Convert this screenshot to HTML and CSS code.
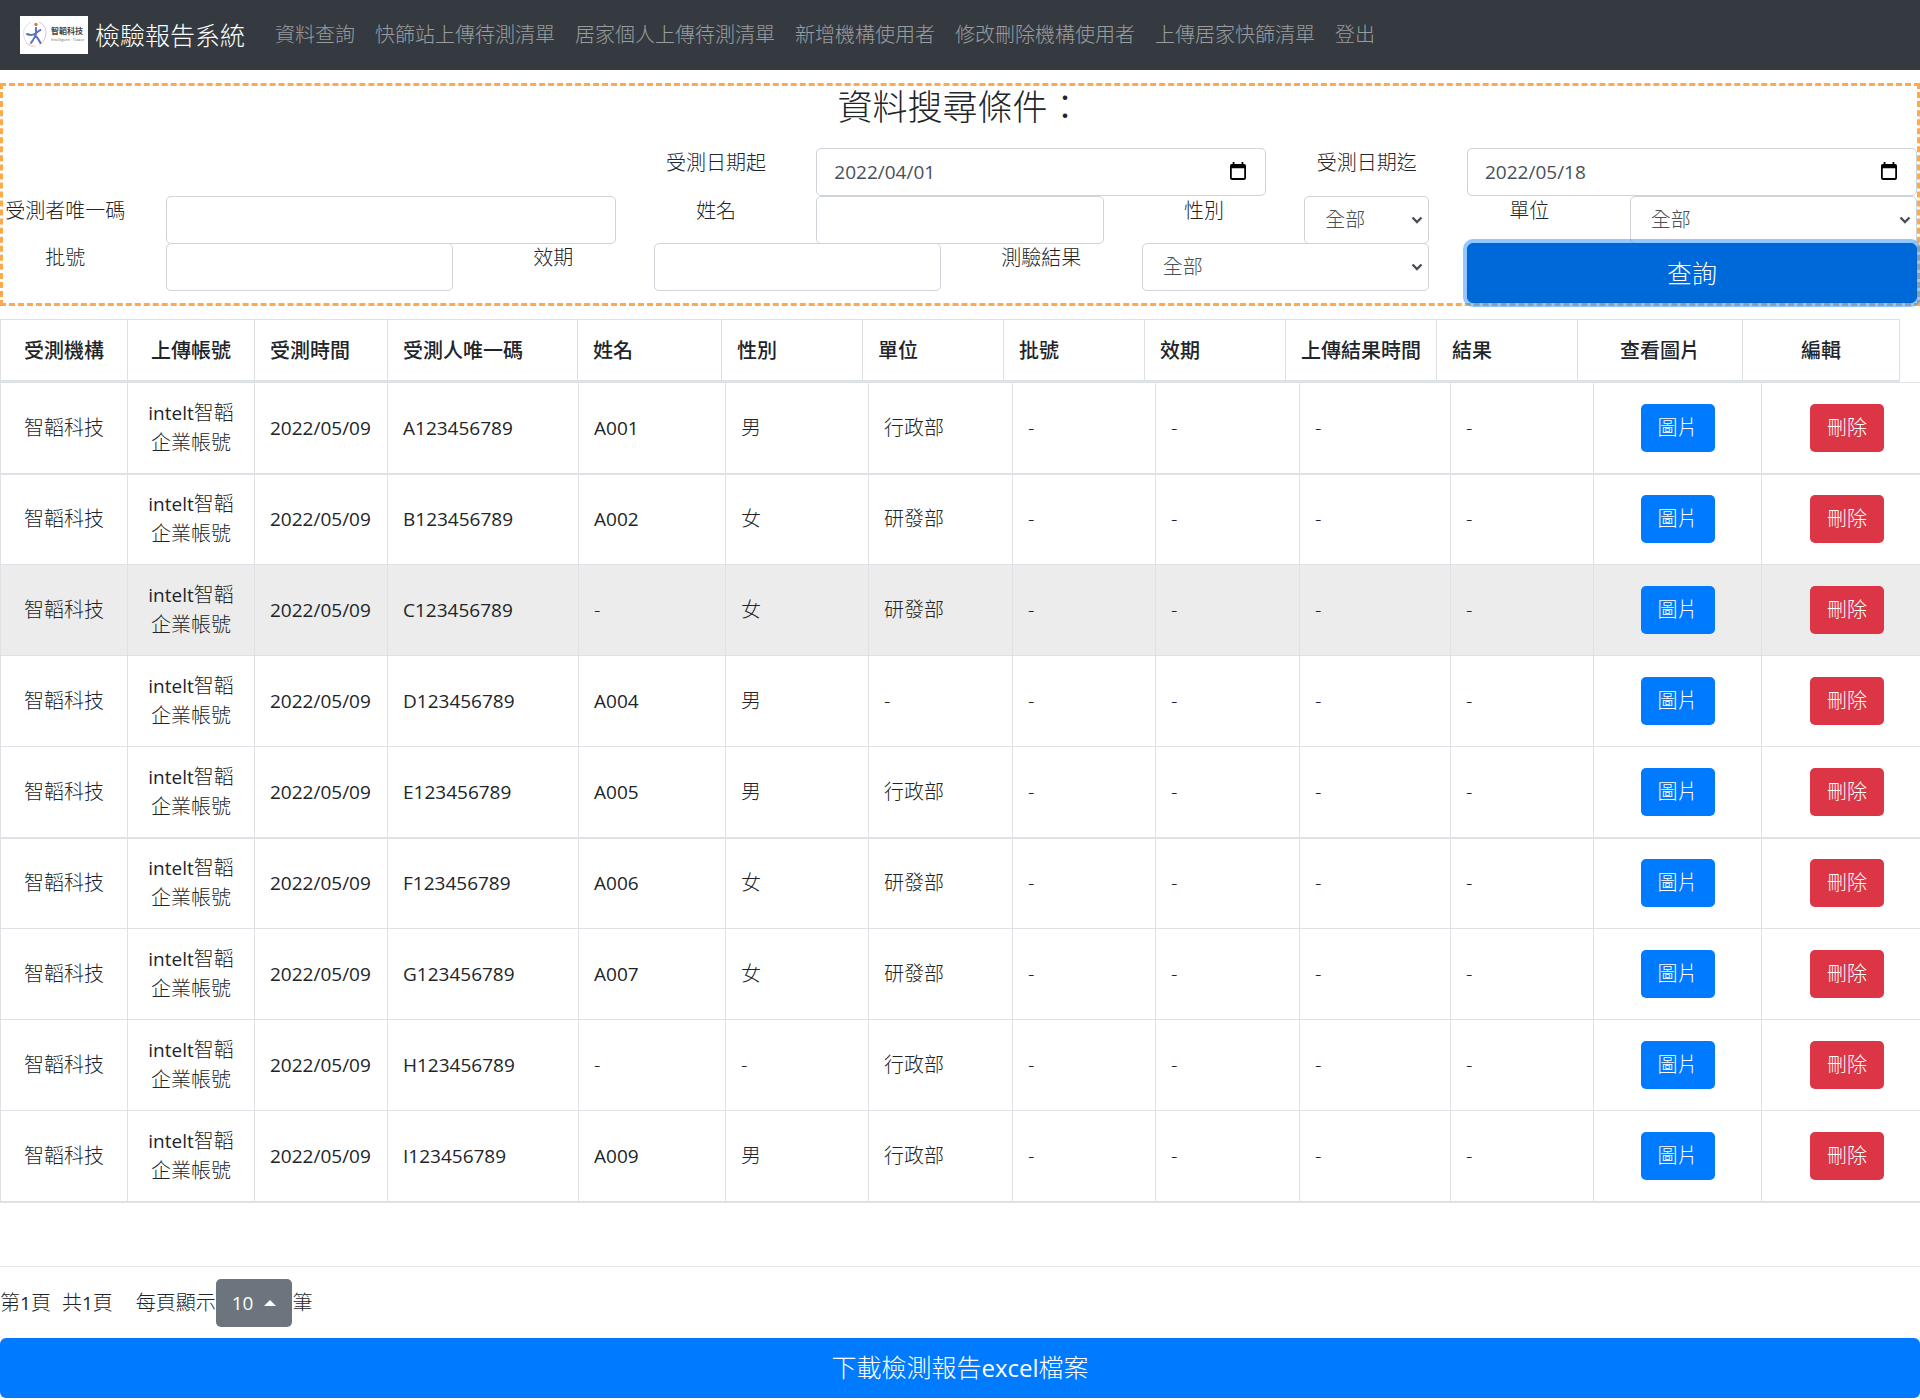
FILE: index.html
```html
<!DOCTYPE html>
<html lang="zh-Hant">
<head>
<meta charset="utf-8">
<meta name="viewport" content="width=device-width, initial-scale=1">
<title>檢驗報告系統</title>
<link rel="stylesheet" href="styles.css">
</head>
<body>
<nav class="navbar">
  <a class="brand" href="#">
    <svg class="brand-logo" viewBox="0 0 68 38" role="img" aria-label="智韜科技">
      <rect width="68" height="38" fill="#fff"/>
      <path d="M11 6.500C5 9 2.500 15 4 21s5 9 9 8.500" fill="none" stroke="#e6dcee" stroke-width="1"/>
      <path d="M19 6c6 3 8 8 6.500 14-1 4-3 7-6 8.500" fill="none" stroke="#c9c6e6" stroke-width="1"/>
      <path d="M6 27c3 3 7 4 10 3" fill="none" stroke="#f8cdb8" stroke-width="1"/>
      <circle cx="16" cy="8.500" r="1.700" fill="#ec6a45"/>
      <path d="M16 12v6M16 17c-.5 4-3 7-5 10M7 18c3 1.500 6 1 8.500-.5s3-3 5-3.500M15 19c2 2 4 5 5.500 8" fill="none" stroke="#5f72ba" stroke-width="2" stroke-linecap="round"/>
      <text class="logo-name" x="31" y="18">智韜科技</text>
      <text class="logo-sub" x="31" y="25">Intelligent · Tower</text>
    </svg>
    <span>檢驗報告系統</span>
  </a>
  <div class="nav-links">
    <a href="#">資料查詢</a>
    <a href="#">快篩站上傳待測清單</a>
    <a href="#">居家個人上傳待測清單</a>
    <a href="#">新增機構使用者</a>
    <a href="#">修改刪除機構使用者</a>
    <a href="#">上傳居家快篩清單</a>
    <a href="#">登出</a>
  </div>
</nav>

<form class="search" onsubmit="return false">
  <h2>資料搜尋條件：</h2>
  <div class="search-grid">
    <label class="from-5" for="date-from">受測日期起</label>
    <div class="span-3 date-field">
      <input class="control latin" id="date-from" type="text" value="2022/04/01">
      <button class="date-picker" type="button" aria-label="選擇起始日期"><svg viewBox="0 0 18 20"><path d="M3 0h2v2h8V0h2v2h1a2 2 0 0 1 2 2v14a2 2 0 0 1-2 2H2a2 2 0 0 1-2-2V4a2 2 0 0 1 2-2h1zM2 7v11h14V7z" fill-rule="evenodd"/></svg></button>
    </div>
    <label for="date-to">受測日期迄</label>
    <div class="span-3 date-field">
      <input class="control latin" id="date-to" type="text" value="2022/05/18">
      <button class="date-picker" type="button" aria-label="選擇結束日期"><svg viewBox="0 0 18 20"><path d="M3 0h2v2h8V0h2v2h1a2 2 0 0 1 2 2v14a2 2 0 0 1-2 2H2a2 2 0 0 1-2-2V4a2 2 0 0 1 2-2h1zM2 7v11h14V7z" fill-rule="evenodd"/></svg></button>
    </div>

    <label for="uid">受測者唯一碼</label>
    <input class="control span-3" id="uid" type="text">
    <label for="name">姓名</label>
    <input class="control span-2" id="name" type="text">
    <label for="gender">性別</label>
    <select class="control" id="gender"><option>全部</option><option>男</option><option>女</option></select>
    <label for="unit">單位</label>
    <select class="control span-2" id="unit"><option>全部</option><option>行政部</option><option>研發部</option></select>

    <label for="batch">批號</label>
    <input class="control span-2" id="batch" type="text">
    <label for="expiry">效期</label>
    <input class="control span-2" id="expiry" type="text">
    <label for="result">測驗結果</label>
    <select class="control span-2" id="result"><option>全部</option></select>
    <button class="btn btn-search span-3" type="submit">查詢</button>
  </div>
</form>

<div class="head-wrap">
  <table class="grid-table">
    <colgroup><col class="w127"><col class="w127"><col class="w133"><col class="w190"><col class="w144"><col class="w141"><col class="w141"><col class="w141"><col class="w141"><col class="w151"><col class="w141"><col class="w165"><col class="w157"></colgroup>
    <thead>
      <tr><th class="center">受測機構</th><th class="center">上傳帳號</th><th>受測時間</th><th>受測人唯一碼</th><th>姓名</th><th>性別</th><th>單位</th><th>批號</th><th>效期</th><th>上傳結果時間</th><th>結果</th><th class="center">查看圖片</th><th class="center">編輯</th></tr>
    </thead>
  </table>
</div>
<table class="grid-table">
  <colgroup><col class="w127"><col class="w127"><col class="w133"><col class="w191"><col class="w147"><col class="w143"><col class="w144"><col class="w143"><col class="w144"><col class="w151"><col class="w143"><col class="w168"><col class="w159"></colgroup>
  <tbody>
    <tr><td class="center">智韜科技</td><td class="center"><span class="latin">intelt</span>智韜<br>企業帳號</td><td class="latin">2022/05/09</td><td class="latin">A123456789</td><td class="latin">A001</td><td>男</td><td>行政部</td><td>-</td><td>-</td><td>-</td><td>-</td><td class="center"><button class="btn btn-view" type="button">圖片</button></td><td class="center action"><button class="btn btn-delete" type="button">刪除</button></td></tr>
    <tr><td class="center">智韜科技</td><td class="center"><span class="latin">intelt</span>智韜<br>企業帳號</td><td class="latin">2022/05/09</td><td class="latin">B123456789</td><td class="latin">A002</td><td>女</td><td>研發部</td><td>-</td><td>-</td><td>-</td><td>-</td><td class="center"><button class="btn btn-view" type="button">圖片</button></td><td class="center action"><button class="btn btn-delete" type="button">刪除</button></td></tr>
    <tr class="hovered"><td class="center">智韜科技</td><td class="center"><span class="latin">intelt</span>智韜<br>企業帳號</td><td class="latin">2022/05/09</td><td class="latin">C123456789</td><td>-</td><td>女</td><td>研發部</td><td>-</td><td>-</td><td>-</td><td>-</td><td class="center"><button class="btn btn-view" type="button">圖片</button></td><td class="center action"><button class="btn btn-delete" type="button">刪除</button></td></tr>
    <tr><td class="center">智韜科技</td><td class="center"><span class="latin">intelt</span>智韜<br>企業帳號</td><td class="latin">2022/05/09</td><td class="latin">D123456789</td><td class="latin">A004</td><td>男</td><td>-</td><td>-</td><td>-</td><td>-</td><td>-</td><td class="center"><button class="btn btn-view" type="button">圖片</button></td><td class="center action"><button class="btn btn-delete" type="button">刪除</button></td></tr>
    <tr><td class="center">智韜科技</td><td class="center"><span class="latin">intelt</span>智韜<br>企業帳號</td><td class="latin">2022/05/09</td><td class="latin">E123456789</td><td class="latin">A005</td><td>男</td><td>行政部</td><td>-</td><td>-</td><td>-</td><td>-</td><td class="center"><button class="btn btn-view" type="button">圖片</button></td><td class="center action"><button class="btn btn-delete" type="button">刪除</button></td></tr>
    <tr><td class="center">智韜科技</td><td class="center"><span class="latin">intelt</span>智韜<br>企業帳號</td><td class="latin">2022/05/09</td><td class="latin">F123456789</td><td class="latin">A006</td><td>女</td><td>研發部</td><td>-</td><td>-</td><td>-</td><td>-</td><td class="center"><button class="btn btn-view" type="button">圖片</button></td><td class="center action"><button class="btn btn-delete" type="button">刪除</button></td></tr>
    <tr><td class="center">智韜科技</td><td class="center"><span class="latin">intelt</span>智韜<br>企業帳號</td><td class="latin">2022/05/09</td><td class="latin">G123456789</td><td class="latin">A007</td><td>女</td><td>研發部</td><td>-</td><td>-</td><td>-</td><td>-</td><td class="center"><button class="btn btn-view" type="button">圖片</button></td><td class="center action"><button class="btn btn-delete" type="button">刪除</button></td></tr>
    <tr><td class="center">智韜科技</td><td class="center"><span class="latin">intelt</span>智韜<br>企業帳號</td><td class="latin">2022/05/09</td><td class="latin">H123456789</td><td>-</td><td>-</td><td>行政部</td><td>-</td><td>-</td><td>-</td><td>-</td><td class="center"><button class="btn btn-view" type="button">圖片</button></td><td class="center action"><button class="btn btn-delete" type="button">刪除</button></td></tr>
    <tr><td class="center">智韜科技</td><td class="center"><span class="latin">intelt</span>智韜<br>企業帳號</td><td class="latin">2022/05/09</td><td class="latin">I123456789</td><td class="latin">A009</td><td>男</td><td>行政部</td><td>-</td><td>-</td><td>-</td><td>-</td><td class="center"><button class="btn btn-view" type="button">圖片</button></td><td class="center action"><button class="btn btn-delete" type="button">刪除</button></td></tr>
  </tbody>
</table>

<footer class="footer">
  <div class="pager">
    <span class="page-no">第<span class="latin">1</span>頁</span>
    <span class="page-total">共<span class="latin">1</span>頁</span>
    <span>每頁顯示</span>
    <button class="btn btn-size latin" type="button">10<span class="caret"></span></button>
    <span>筆</span>
  </div>
  <button class="btn btn-download" type="button">下載檢測報告<span class="latin-lg">excel</span>檔案</button>
</footer>
</body>
</html>
```

FILE: styles.css
```css
*, *::before, *::after { box-sizing: border-box; }

body {
  margin: 0;
  font-family: "Open Sans", "Noto Sans CJK TC", sans-serif;
  font-size: 20px;
  font-weight: 300;
  line-height: 30px;
  color: #212529;
  background: #fff;
}

button, input, select { font: inherit; margin: 0; }

/* Latin runs sit one step below the Chinese text */
.latin { font-size: 19px; font-weight: 400; }
.latin-lg { font-size: 24px; font-weight: 400; }

.navbar {
  display: flex;
  align-items: center;
  min-height: 70px;
  padding: 10px 20px;
  background: #343a40;
}
.brand {
  display: flex;
  align-items: center;
  gap: 7px;
  margin-right: 20px;
  font-size: 25px;
  color: #fff;
  text-decoration: none;
  white-space: nowrap;
}
.brand-logo { width: 68px; height: 38px; }
.logo-name { font-size: 8px; font-weight: 700; fill: #444; }
.logo-sub { font-size: 4px; font-weight: 400; fill: #666; }
.nav-links { display: flex; flex-wrap: wrap; }
.nav-links a {
  padding: 0 10px;
  color: rgba(255, 255, 255, 0.5);
  text-decoration: none;
}

.search {
  margin: 13px 0;
  border: 3px dashed #ffa94d;
}
.search h2 {
  margin: 0 0 20px;
  font-size: 35px;
  font-weight: 300;
  line-height: 42px;
  text-align: center;
}
.search-grid {
  display: grid;
  grid-template-columns: repeat(12, minmax(0, 1fr));
  grid-template-rows: 48px 47px 60px;
  column-gap: 38px;
  align-items: start;
}
.search-grid label { text-align: center; white-space: nowrap; }
.from-5 { grid-column-start: 5; }
.span-2 { grid-column-end: span 2; }
.span-3 { grid-column-end: span 3; }

.control {
  width: 100%;
  height: 48px;
  padding: 8px 17px;
  border: 1px solid #ced4da;
  border-radius: 5px;
  background: #fff;
  color: #495057;
}
select.control {
  appearance: none;
  padding: 8px 20px;
  background: #fff url("data:image/svg+xml,%3Csvg xmlns='http://www.w3.org/2000/svg' viewBox='0 0 12 8'%3E%3Cpath d='M1.500 1.500L6 6l4.500-4.500' fill='none' stroke='%23495057' stroke-width='2.400'/%3E%3C/svg%3E") no-repeat right 5px center / 12px 8px;
}
.date-field { position: relative; }
.date-picker {
  position: absolute;
  top: 14px;
  right: 20px;
  width: 16px;
  height: 18px;
  padding: 0;
  border: 0;
  background: none;
}
.date-picker svg { display: block; width: 16px; height: 18px; fill: #000; }

.btn {
  border: 1px solid transparent;
  border-radius: 5px;
  padding: 8px 16px;
  color: #fff;
  cursor: pointer;
}
.btn-search {
  position: relative;
  height: 60px;
  border-color: #0062cc;
  background: #0069d9;
  font-size: 25px;
  border-radius: 6px;
  box-shadow: 0 0 0 4px rgba(38, 143, 255, 0.5);
}

.head-wrap { padding-right: 21px; }
.grid-table {
  width: 100%;
  table-layout: fixed;
  border-collapse: collapse;
}
.grid-table th, .grid-table td {
  padding: 16px 15px 14px;
  border: 1px solid #dee2e6;
  text-align: left;
  vertical-align: middle;
}
.grid-table th {
  border-bottom-width: 2px;
  font-weight: 500;
  white-space: nowrap;
}
.grid-table tbody tr:nth-child(4n+1) td { border-bottom-width: 2px; }
.grid-table td { height: 91px; padding-top: 0; padding-bottom: 0; }
.grid-table .center { text-align: center; }
.grid-table .action { padding-left: 27px; }
.hovered { background: #ececec; }

.w127 { width: 127px; }
.w133 { width: 133px; }
.w141 { width: 141px; }
.w143 { width: 143px; }
.w144 { width: 144px; }
.w147 { width: 147px; }
.w151 { width: 151px; }
.w157 { width: 157px; }
.w159 { width: 159px; }
.w165 { width: 165px; }
.w168 { width: 168px; }
.w190 { width: 190px; }
.w191 { width: 191px; }

.btn-view, .btn-delete { height: 48px; white-space: nowrap; }
.btn-view { background: #007bff; }
.btn-delete { background: #dc3545; }

.footer {
  margin-top: 63px;
  border-top: 1px solid #e5e5e5;
  padding-top: 12px;
}
.pager { display: flex; align-items: center; margin-bottom: 11px; }
.page-no { margin-right: 11px; }
.page-total { margin-right: 23px; }
.btn-size {
  display: flex;
  align-items: center;
  gap: 11px;
  height: 48px;
  padding: 8px 15px;
  background: #6c757d;
}
.caret {
  border: 6px solid transparent;
  border-top: 0;
  border-bottom-color: #fff;
}
.btn-download {
  display: block;
  width: 100%;
  height: 60px;
  border-radius: 6px;
  background: #007bff;
  font-size: 25px;
}
```
